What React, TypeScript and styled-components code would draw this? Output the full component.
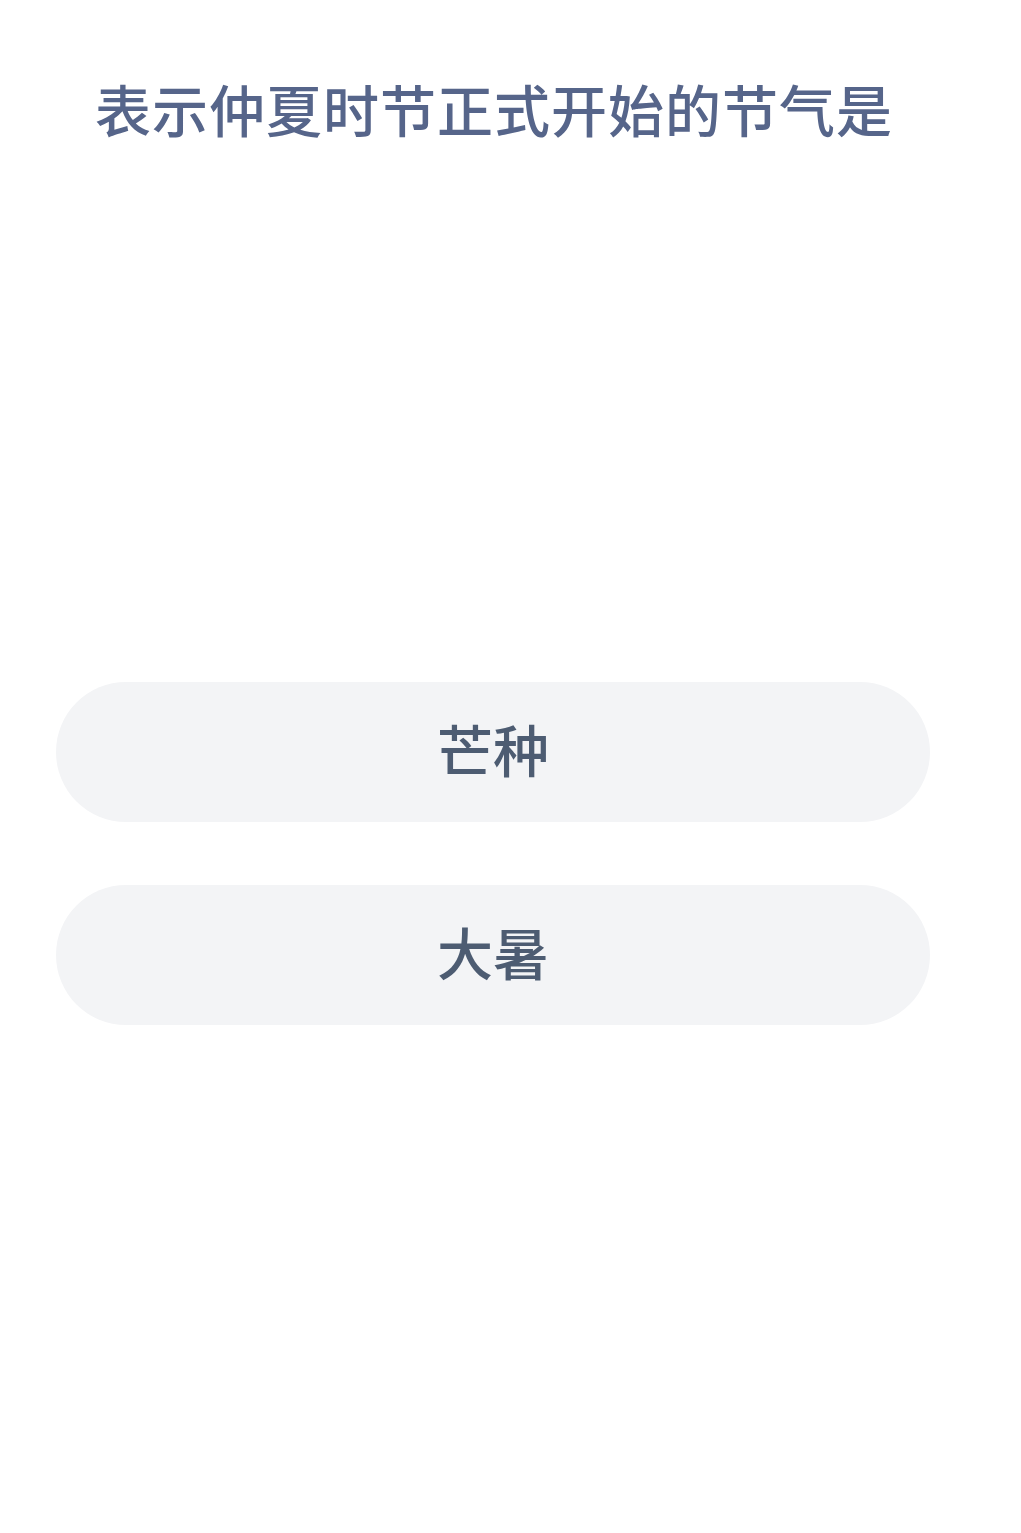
import React from 'react'
import styled, { createGlobalStyle } from 'styled-components'

const GlobalStyle = createGlobalStyle`
  html, body {
    margin: 0;
    padding: 0;
    background: #ffffff;
  }
  body {
    font-family: "Noto Sans CJK SC", "Noto Sans", sans-serif;
  }
`

const options = ['芒种', '大暑']

const App = () => {
  return (
    <>
      <GlobalStyle />
      <Page>
        <Question>表示仲夏时节正式开始的节气是</Question>
        <Options>
          {options.map((opt) => (
            <Option key={opt}>{opt}</Option>
          ))}
        </Options>
      </Page>
    </>
  )
}

export default App

const Page = styled.div`
  width: 1021px;
  min-height: 1533px;
  padding: 69px 91px 0 56px;
  box-sizing: border-box;
`

const Question = styled.h1`
  margin: 0 0 0 39px;
  font-size: 56px;
  line-height: 78px;
  font-weight: 500;
  color: #56658a;
  letter-spacing: 1px;
  white-space: nowrap;
`

const Options = styled.div`
  display: flex;
  flex-direction: column;
  gap: 63px;
  margin-top: 535px;
`

const Option = styled.button`
  display: flex;
  align-items: center;
  justify-content: center;
  height: 140px;
  width: 100%;
  border: none;
  border-radius: 70px;
  background: #f3f4f6;
  color: #4d5c72;
  font-family: inherit;
  font-size: 56px;
  font-weight: 500;
  padding: 0 0 9px;
  cursor: pointer;
`
